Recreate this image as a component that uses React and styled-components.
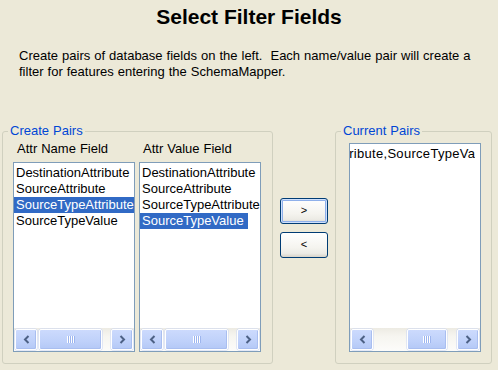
import React from 'react';
import styled, { createGlobalStyle } from 'styled-components';

const Global = createGlobalStyle`
  html, body { margin: 0; padding: 0; background: #ECE9D8; }
  body { font-family: "Liberation Sans", Arial, sans-serif; font-size: 13px; color: #000; word-spacing: 0.4px; }
`;

const Page = styled.div`
  width: 498px;
  height: 370px;
  box-sizing: border-box;
  padding-top: 5px;
  overflow: hidden;
  background: #ECE9D8;
`;

const Title = styled.h1`
  margin: 0;
  font-size: 21px;
  line-height: 24px;
  font-weight: bold;
  text-align: center;
  word-spacing: 0;
`;

const Description = styled.p`
  margin: 19px 0 0 19px;
  line-height: 16px;
  white-space: pre;
`;

const Main = styled.div`
  display: flex;
  align-items: flex-start;
  gap: 7px;
  margin-top: 51px;
  padding-left: 2px;
`;

const Group = styled.div`
  position: relative;
  box-sizing: border-box;
  width: ${p => p.$w}px;
  height: 233px;
  border: 1px solid #D0D0BF;
  border-radius: 3px;
  padding: ${p => p.$pad};
`;

const Legend = styled.span`
  position: absolute;
  top: -9px;
  left: 5px;
  padding: 0 2px;
  line-height: 16px;
  color: #0046D5;
  background: #ECE9D8;
`;

const Columns = styled.div`
  display: grid;
  grid-template-columns: 122px 122px;
  column-gap: 4px;
`;

const Column = styled.div`
  display: flex;
  flex-direction: column;
  gap: 5px;
`;

const ColumnHeader = styled.div`
  line-height: 16px;
  padding-left: 4px;
`;

const ListBox = styled.div`
  box-sizing: border-box;
  width: ${p => p.$w}px;
  height: ${p => p.$h}px;
  border: 1px solid #7F9DB9;
  background: #fff;
  display: flex;
  flex-direction: column;
  overflow: hidden;
`;

const Items = styled.div`
  flex: 1;
  overflow: hidden;
  padding-top: 2px;
  margin-right: ${p => p.$clip || 0}px;
  letter-spacing: ${p => p.$spacing || 0}px;
`;

const ItemsInner = styled.div`
  margin-left: ${p => -(p.$scroll || 0)}px;
`;

const Item = styled.div`
  width: max-content;
  padding: 0 4px 0 2px;
  line-height: 16px;
  white-space: nowrap;
  background: ${p => (p.$selected ? '#316AC5' : 'transparent')};
  color: ${p => (p.$selected ? '#fff' : '#000')};
`;

const HScroll = styled.div`
  height: 23px;
  flex: none;
  display: flex;
  align-items: center;
  padding: 0 1px;
  background: linear-gradient(to bottom, #EDEBE3 0%, #F6F5F0 35%, #FCFCFA 100%);
`;

const ScrollButton = styled.div`
  box-sizing: border-box;
  width: 22px;
  height: 21px;
  flex: none;
  display: flex;
  align-items: center;
  justify-content: center;
  border: 1px solid #FFFFFF;
  border-radius: 2px;
  background: linear-gradient(to bottom, #CCDAFD 0%, #BFD1FA 60%, #B4C8F6 100%);
  box-shadow: inset -1px -1px 0 #A9BEF0, 0 0 0 0.5px #C9D6F4;
`;

const Track = styled.div`
  flex: 1;
  align-self: stretch;
  display: flex;
  align-items: center;
`;

const Thumb = styled(ScrollButton)`
  width: ${p => p.$w}px;
  margin-left: ${p => p.$offset}px;
`;

const ButtonColumn = styled.div`
  width: 48px;
  flex: none;
  display: flex;
  flex-direction: column;
  gap: 8px;
  padding-top: 67px;
`;

const PushButton = styled.button`
  box-sizing: border-box;
  width: 48px;
  height: 26px;
  padding: 0 0 2px;
  border: 1px solid #003C74;
  border-radius: 3px;
  font-family: "Liberation Sans", Arial, sans-serif;
  font-size: 11px;
  color: #000;
  background: linear-gradient(to bottom, #FFFFFF 0%, #F5F4EF 60%, #ECEBE5 85%, #D8D3C8 100%);
  box-shadow: ${p => (p.$default ? 'inset 0 0 0 1px #CFE0FC, inset 0 0 0 2px #8FB0EA' : 'none')};
`;

const Arrow = ({ dir }) => (
  <svg width="7" height="9" viewBox="0 0 7 9">
    <polyline
      points={dir === 'left' ? '5.5,1 2,4.5 5.5,8' : '1.5,1 5,4.5 1.5,8'}
      fill="none"
      stroke="#4D6185"
      strokeWidth="2"
    />
  </svg>
);

const Grip = () => (
  <svg width="8" height="7" viewBox="0 0 8 7">
    {[0, 2, 4, 6].map(x => (
      <g key={x}>
        <rect x={x} y="0" width="1" height="7" fill="#FFFFFF" />
        <rect x={x + 1} y="0" width="1" height="7" fill="#9DB5EE" />
      </g>
    ))}
  </svg>
);

const ScrollBar = ({ thumbW, thumbOffset }) => (
  <HScroll>
    <ScrollButton><Arrow dir="left" /></ScrollButton>
    <Track>
      <Thumb $w={thumbW} $offset={thumbOffset}><Grip /></Thumb>
    </Track>
    <ScrollButton><Arrow dir="right" /></ScrollButton>
  </HScroll>
);

const List = ({ w, h, items, selected, scroll, clip, spacing, thumbW, thumbOffset }) => (
  <ListBox $w={w} $h={h}>
    <Items $clip={clip} $spacing={spacing}>
      <ItemsInner $scroll={scroll}>
        {items.map(it => (
          <Item key={it} $selected={it === selected}>{it}</Item>
        ))}
      </ItemsInner>
    </Items>
    <ScrollBar thumbW={thumbW} thumbOffset={thumbOffset} />
  </ListBox>
);

const fields = ['DestinationAttribute', 'SourceAttribute', 'SourceTypeAttribute', 'SourceTypeValue'];

export default function App() {
  return (
    <Page>
      <Global />
      <Title>Select Filter Fields</Title>
      <Description>
        {'Create pairs of database fields on the left.  Each name/value pair will create a\nfilter for features entering the SchemaMapper.'}
      </Description>
      <Main>
        <Group $w={271} $pad="9px 11px 0 10px">
          <Legend>Create Pairs</Legend>
          <Columns>
            <Column>
              <ColumnHeader>Attr Name Field</ColumnHeader>
              <List w={122} h={190} items={fields} selected="SourceTypeAttribute" thumbW={63} thumbOffset={2} />
            </Column>
            <Column>
              <ColumnHeader>Attr Value Field</ColumnHeader>
              <List w={122} h={190} items={fields} selected="SourceTypeValue" thumbW={63} thumbOffset={2} />
            </Column>
          </Columns>
        </Group>
        <ButtonColumn>
          <PushButton $default>&gt;</PushButton>
          <PushButton>&lt;</PushButton>
        </ButtonColumn>
        <Group $w={157} $pad="11px 10px 0 13px">
          <Legend>Current Pairs</Legend>
          <List
            w={132}
            h={209}
            items={['SourceTypeAttribute,SourceTypeValue']}
            scroll={92}
            clip={5}
            spacing={0.3}
            thumbW={40}
            thumbOffset={34}
          />
        </Group>
      </Main>
    </Page>
  );
}
